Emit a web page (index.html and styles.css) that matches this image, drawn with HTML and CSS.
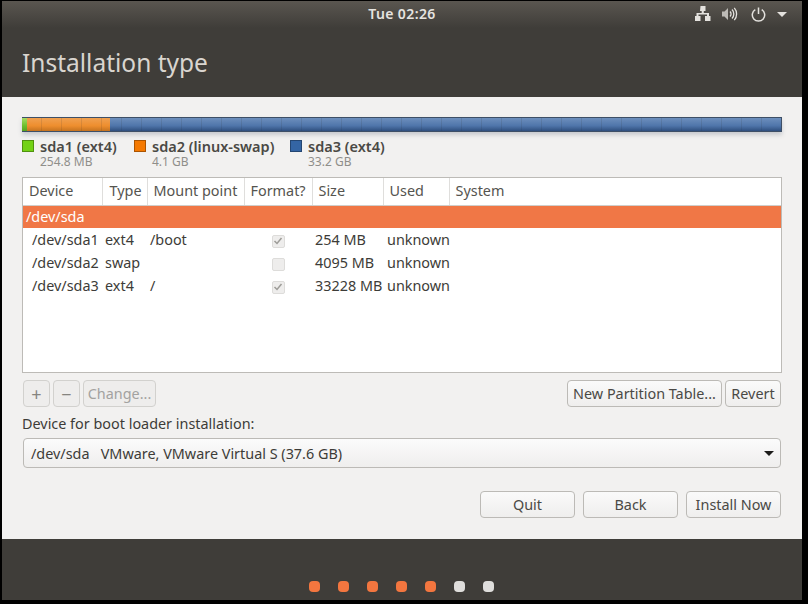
FILE: index.html
```html
<!DOCTYPE html>
<html>
<head>
  <meta charset="UTF-8">
  <title>Installation type</title>
  <link rel="stylesheet" href="styles.css">
</head>
<body>

  <div class="window">
    <div class="topbar">
      <span class="clock">Tue 02:26</span>
      <div class="tray">
        <svg class="tray-net" width="16" height="16" viewBox="0 0 16 16"><path d="M5.500 0h5v5h-1.700v2h5.200v3h1.500v5h-5.500v-5h2v-1.500h-8.500v1.500h2v5h-5.500v-5h1.500v-3h5.200v-2h-1.700z" fill="#e4e2de"/></svg>
        <svg class="tray-vol" width="16" height="16" viewBox="0 0 16 16"><path d="M0 5.500h2.500l3.500-3.500v12l-3.500-3.500h-2.500z" fill="#bdbbb6"/><path d="M8 5.500a3.500 3.500 0 0 1 0 5M10 3.500a6.500 6.500 0 0 1 0 9M12.300 1.800a9.500 9.500 0 0 1 0 12.400" fill="none" stroke="#e4e2de" stroke-width="1.300"/></svg>
        <svg class="tray-power" width="15" height="15" viewBox="0 0 15 15"><path d="M4.300 2.600a6.200 6.200 0 1 0 6.400 0M7.500 0.500v6.500" fill="none" stroke="#e4e2de" stroke-width="1.500"/></svg>
        <span class="tray-arrow"></span>
      </div>
    </div>

    <div class="header">
      <h1>Installation type</h1>
    </div>

    <div class="content">
      <div class="partbar">
        <div class="part part-green"></div>
        <div class="part part-orange"></div>
        <div class="part part-blue"></div>
      </div>

      <div class="legend">
        <div class="legend-item legend-sda1">
          <span class="swatch swatch-green"></span>
          <div><div class="legend-name">sda1 (ext4)</div><div class="legend-size">254.8 MB</div></div>
        </div>
        <div class="legend-item legend-sda2">
          <span class="swatch swatch-orange"></span>
          <div><div class="legend-name">sda2 (linux-swap)</div><div class="legend-size">4.1 GB</div></div>
        </div>
        <div class="legend-item">
          <span class="swatch swatch-blue"></span>
          <div><div class="legend-name">sda3 (ext4)</div><div class="legend-size">33.2 GB</div></div>
        </div>
      </div>

      <div class="table-box">
        <table>
          <colgroup>
            <col class="c-device"><col class="c-type"><col class="c-mount"><col class="c-format"><col class="c-size"><col class="c-used"><col>
          </colgroup>
          <thead>
            <tr>
              <th>Device</th>
              <th class="th-type">Type</th>
              <th>Mount point</th>
              <th>Format?</th>
              <th>Size</th>
              <th>Used</th>
              <th>System</th>
            </tr>
          </thead>
          <tbody>
            <tr class="selected"><td colspan="7">/dev/sda</td></tr>
            <tr>
              <td class="dev">/dev/sda1</td><td class="type">ext4</td><td class="mount">/boot</td>
              <td class="check-cell"><span class="check"><svg width="10" height="10" viewBox="0 0 10 10"><path d="M1.500 5l2.500 2.500 4.500-5.500" fill="none" stroke="#9d9c98" stroke-width="1.500"/></svg></span></td>
              <td class="size">254 MB</td><td class="used">unknown</td><td></td>
            </tr>
            <tr>
              <td class="dev">/dev/sda2</td><td class="type">swap</td><td class="mount"></td>
              <td class="check-cell"><span class="check"></span></td>
              <td class="size">4095 MB</td><td class="used">unknown</td><td></td>
            </tr>
            <tr>
              <td class="dev">/dev/sda3</td><td class="type">ext4</td><td class="mount">/</td>
              <td class="check-cell"><span class="check"><svg width="10" height="10" viewBox="0 0 10 10"><path d="M1.500 5l2.500 2.500 4.500-5.500" fill="none" stroke="#9d9c98" stroke-width="1.500"/></svg></span></td>
              <td class="size">33228 MB</td><td class="used">unknown</td><td></td>
            </tr>
          </tbody>
        </table>
      </div>

      <div class="toolbar">
        <div class="btn-group">
          <button class="btn btn-icon" disabled>+</button>
          <button class="btn btn-icon" disabled>&minus;</button>
          <button class="btn btn-change" disabled>Change...</button>
        </div>
        <div class="btn-group">
          <button class="btn btn-table">New Partition Table...</button>
          <button class="btn btn-revert">Revert</button>
        </div>
      </div>

      <div class="boot-label">Device for boot loader installation:</div>
      <div class="combo">
        <span>/dev/sda&nbsp;&nbsp;&nbsp;VMware, VMware Virtual S (37.6 GB)</span>
        <span class="combo-arrow"></span>
      </div>

      <div class="actions">
        <button class="btn btn-action">Quit</button>
        <button class="btn btn-action">Back</button>
        <button class="btn btn-action">Install Now</button>
      </div>
    </div>

    <div class="footer">
      <span class="dot on"></span>
      <span class="dot on"></span>
      <span class="dot on"></span>
      <span class="dot on"></span>
      <span class="dot on"></span>
      <span class="dot"></span>
      <span class="dot"></span>
    </div>
  </div>

</body>
</html>
```

FILE: styles.css
```css
* { box-sizing: border-box; }
html, body { margin: 0; height: 100%; background: #000; overflow: hidden; }
body { padding: 1px 0 0 2px; font-family: "Noto Sans", "Open Sans", sans-serif; font-size: 14.4px; color: #3d3c38; }

.window { width: 800px; height: 599px; display: flex; flex-direction: column; background: #f2f1f0; }

.topbar { height: 27px; flex: none; display: flex; align-items: center; justify-content: center; position: relative; background: linear-gradient(#5a5650, #3f3d39); }
.clock { color: #e6e4e0; font-size: 14px; font-weight: 600; letter-spacing: .4px; margin-top: -3px; }
.tray { position: absolute; right: 15px; top: 5px; display: flex; align-items: center; }
.tray-net { margin-right: 11px; }
.tray-vol { margin-right: 13px; }
.tray-power { margin-right: 11px; }
.tray-arrow { width: 0; height: 0; border: 5px solid transparent; border-top: 5px solid #e4e2de; border-bottom: 0; }

.header { height: 69px; flex: none; background: #3f3d39; padding: 17px 0 0 20px; }
h1 { margin: 0; font-size: 24.5px; font-weight: 400; line-height: 36px; color: #d9d5cf; }

.content { flex: 1; padding: 20px 20px 0 20px; }

.partbar { height: 15px; display: flex; border: 1px solid #3e4f66; border-width: 1px 1px 1px 0; position: relative; box-shadow: 0 3px 4px rgba(80, 90, 110, .25); }
.partbar::after { content: ""; position: absolute; inset: 0; background: repeating-linear-gradient(90deg, transparent 0 19px, rgba(40, 40, 40, .12) 19px 20px); }
.part { height: 100%; }
.part-green { width: 5px; background: linear-gradient(#a5db63, #6cbf2c 60%, #56a020); }
.part-orange { width: 83px; background: linear-gradient(#f0a050, #ee8e2e 60%, #c57320); }
.part-blue { flex: 1; background: linear-gradient(#6d8fbd, #4f75aa 60%, #2f4f7e); }

.legend { display: flex; margin-top: 6px; height: 32px; }
.legend-item { display: flex; }
.legend-sda1 { width: 112px; }
.legend-sda2 { width: 156px; }
.swatch { width: 12px; height: 12px; margin-top: 2px; margin-right: 6px; border: 1px solid rgba(0, 0, 0, .3); }
.swatch-green { background: #73d216; }
.swatch-orange { background: #f57900; }
.swatch-blue { background: #3465a4; }
.legend-name { font-size: 14.5px; font-weight: 600; line-height: 16px; color: #4a4945; }
.legend-size { font-size: 12px; line-height: 15px; color: #8f8e8a; }

.table-box { height: 196px; margin-top: 7px; background: #fff; border: 1px solid #bdbbb7; }
table { width: 100%; table-layout: fixed; border-collapse: collapse; }
.c-device { width: 79px; }
.c-type { width: 45px; }
.c-mount { width: 97px; }
.c-format { width: 68px; }
.c-size { width: 71px; }
.c-used { width: 66px; }
th { height: 27px; padding: 0 0 2px 6px; font-weight: 400; text-align: left; color: #55544f; border-right: 1px solid #dfdedc; border-bottom: 1px solid #cfcecb; }
th:last-child { border-right: 0; }
.th-type { padding-left: 7px; }
td { height: 23px; padding: 0; white-space: nowrap; overflow: visible; }
.selected td { background: #f07746; color: #fff; padding-left: 3px; }
.dev { padding-left: 9px; }
.type { padding-left: 3px; }
.mount { padding-left: 3px; }
.size { padding-left: 3px; }
.used { padding-left: 4px; }
.check-cell { text-align: center; }
.check { display: inline-flex; width: 13px; height: 13px; align-items: center; justify-content: center; vertical-align: middle; background: #eeedec; border: 1px solid #dddcda; border-radius: 2px; }

.toolbar { display: flex; justify-content: space-between; margin-top: 7px; padding: 0 1px; }
.btn-group { display: flex; gap: 3px; }
.btn { height: 27px; padding: 0; font: inherit; color: #4a4945; background: linear-gradient(#fafafa, #efeeed); border: 1px solid #bcbab6; border-radius: 4px; }
.btn:disabled { color: #a3a2a0; background: #eeedec; border-color: #d2d1ce; }
.btn-icon { width: 27px; font-size: 18px; line-height: 20px; }
.btn-icon:disabled { color: #858480; }
.btn-change { width: 73px; }
.btn-table { width: 155px; }
.btn-revert { width: 56px; }

.boot-label { margin-top: 7px; line-height: 20px; }

.combo { height: 30px; margin: 4px 1px 0 1px; padding: 0 7px; display: flex; align-items: center; justify-content: space-between; background: linear-gradient(#fbfbfb, #efeeed); border: 1px solid #bcbab6; border-radius: 4px; }
.combo-arrow { width: 0; height: 0; margin-right: -1px; border: 5px solid transparent; border-top: 5px solid #1c1c1a; border-bottom: 0; }

.actions { display: flex; justify-content: flex-end; gap: 8px; margin: 23px 1px 0 0; }
.btn-action { width: 95px; }

.footer { height: 61px; flex: none; background: #3f3d39; display: flex; justify-content: center; gap: 18px; padding: 42px 2px 0 0; }
.dot { width: 11px; height: 11px; border-radius: 4px; background: #dfdedc; }
.dot.on { background: #f3763f; }
```
